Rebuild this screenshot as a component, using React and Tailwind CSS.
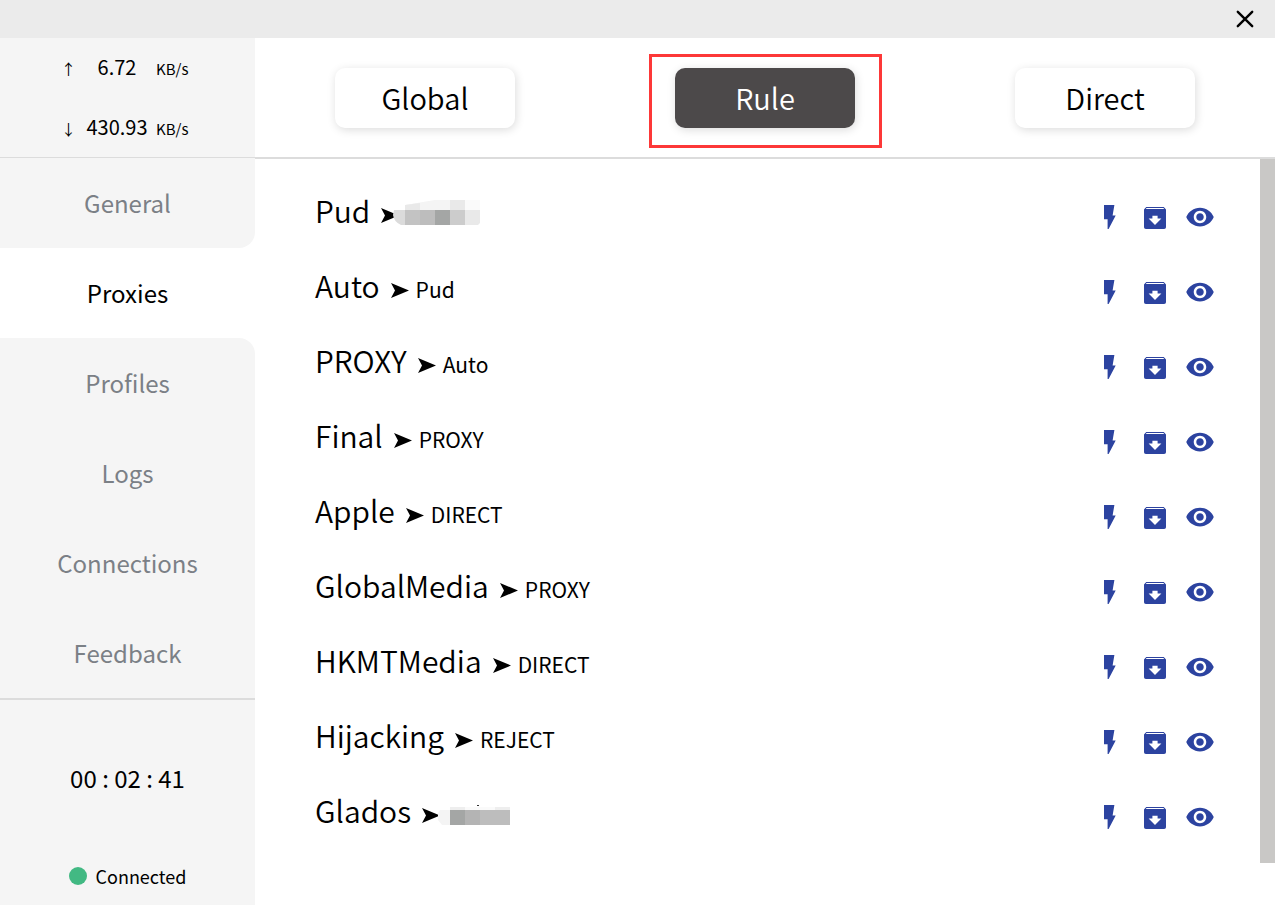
const nav = ["General", "Proxies", "Profiles", "Logs", "Connections", "Feedback"];
const modes = ["Global", "Rule", "Direct"];
const groups = [
  ["Pud", null],
  ["Auto", "Pud"],
  ["PROXY", "Auto"],
  ["Final", "PROXY"],
  ["Apple", "DIRECT"],
  ["GlobalMedia", "PROXY"],
  ["HKMTMedia", "DIRECT"],
  ["Hijacking", "REJECT"],
  ["Glados", null],
];

function Speed({ arrow, value }) {
  return (
    <div className="flex h-[60px] items-baseline pl-[61px] leading-[58px]">
      <span className="w-[17px] text-[15px]">{arrow}</span>
      <span className="w-[78px] text-center text-[20px]">{value}</span>
      <span className="text-[15px]">KB/s</span>
    </div>
  );
}

function Arrow() {
  return (
    <svg viewBox="0 0 18 15" className="mt-[7px] ml-[11px] h-[15px] w-[18px] shrink-0" aria-hidden="true">
      <path d="M0 0 18 7.5 0 15 4 7.5Z" />
    </svg>
  );
}

function FlashIcon() {
  return (
    <svg viewBox="0 0 30 30" className="h-[30px] w-[30px]" fill="currentColor" aria-hidden="true">
      <path d="M9 3H19.4L17.6 13.5H20.7L13.6 27H12.6V17.3H9Z" />
    </svg>
  );
}

function ArchiveIcon() {
  return (
    <svg viewBox="0 0 30 30" className="h-[30px] w-[30px]" fill="currentColor" fillRule="evenodd" aria-hidden="true">
      <path d="M6.2 5H23.8L26 7.4V25.2Q26 27 24.1 27H5.9Q4 27 4 25.2V7.4ZM6.6 6 5.8 7.1H24.2L23.4 6ZM12.4 13.7V16.4H8.6L15 23 21.4 16.4H17.6V13.7Z" />
    </svg>
  );
}

function EyeIcon() {
  return (
    <svg viewBox="0 0 24 24" className="h-[30px] w-[30px]" fill="currentColor" aria-hidden="true">
      <path d="M12 4.5C7 4.5 2.73 7.61 1 12c1.73 4.39 6 7.5 11 7.5s9.27-3.11 11-7.5c-1.73-4.39-6-7.5-11-7.5zM12 17c-2.76 0-5-2.24-5-5s2.24-5 5-5 5 2.24 5 5-2.24 5-5 5zm0-8c-1.66 0-3 1.34-3 3s1.34 3 3 3 3-1.34 3-3-1.34-3-3-3z" />
    </svg>
  );
}

function MaskPud() {
  return (
    <svg viewBox="0 0 87 25" className="-ml-[6px] mt-[2px] h-[25px] w-[87px]" aria-hidden="true">
      <path fill="#f4f4f4" d="M12 5 42 0H87V10H12Z" />
      <path fill="#e9e9e9" d="M12 5 27 3V10H12Z" />
      <path fill="#e9e9e9" d="M57 0H72V10H57Z" />
      <path fill="#fafafa" d="M72 0H87V10H72Z" />
      <path fill="#dbdbdb" d="M1 10H12V25H8Q1 22 0 15Z" />
      <path fill="#c3c3c3" d="M12 10H27V25H12Z" />
      <path fill="#bdbdbd" d="M27 10H42V25H27Z" />
      <path fill="#a4a6a5" d="M42 10H57V25H42Z" />
      <path fill="#cccccc" d="M57 10H72V25H57Z" />
      <path fill="#e9e9e9" d="M72 10H87V23L85 25H72Z" />
    </svg>
  );
}

function MaskGlados() {
  return (
    <svg viewBox="0 0 72 20" className="-ml-[2px] mt-[6px] h-[20px] w-[72px]" aria-hidden="true">
      <path fill="#f4f4f4" d="M2 5H12V20H4L0 15V8Z" />
      <path fill="#eeeeee" d="M12 2H27V5H12ZM57 2H72V5H57Z" />
      <path fill="#fafafa" d="M27 2H57V5H27Z" />
      <path fill="#a4a6a5" d="M12 5H27V20H12Z" />
      <path fill="#b4b4b4" d="M27 5H42V20H27Z" />
      <path fill="#bdbdbd" d="M42 5H72V20H42Z" />
      <path fill="#333333" d="M39 0H41V1H39Z" />
    </svg>
  );
}

export default function App() {
  return (
    <div className="flex min-h-screen flex-col bg-white font-['Noto_Sans_CJK_SC',sans-serif] text-black">
      <header className="flex h-[38px] items-center justify-end bg-[#ebebeb] pr-5">
        <button type="button" aria-label="Close">
          <svg viewBox="0 0 20 20" className="h-5 w-5" fill="none" stroke="#000" strokeWidth="2.4" strokeLinecap="round">
            <path d="M2.8 2.8 17.2 17.2M17.2 2.8 2.8 17.2" />
          </svg>
        </button>
      </header>

      <div className="flex flex-1">
        <aside className="flex w-[255px] shrink-0 flex-col bg-[#f5f5f5]">
          <div className="h-[120px] border-b border-[#dcdcdc]">
            <Speed arrow="↑" value="6.72" />
            <Speed arrow="↓" value="430.93" />
          </div>
          <nav className="flex flex-col bg-white">
            {nav.map((item) => (
              <a
                key={item}
                href="#"
                aria-current={item === "Proxies" ? "page" : undefined}
                className={
                  "flex h-[90px] items-center justify-center text-[24px] " +
                  (item === "Proxies" ? "bg-white text-black" : "bg-[#f5f5f5] text-[#7b8086]") +
                  (item === "General" ? " rounded-br-2xl" : "") +
                  (item === "Profiles" ? " rounded-tr-2xl" : "")
                }
              >
                {item}
              </a>
            ))}
          </nav>
          <div className="flex flex-1 flex-col items-center border-t-2 border-[#dcdcdc] pt-[58px]">
            <time className="text-[24px] leading-[40px]">00 : 02 : 41</time>
            <div className="mt-[62px] flex items-center gap-[9px] text-[18px] leading-[32px]">
              <span className="h-[18px] w-[18px] rounded-full bg-[#42b983]" />
              Connected
            </div>
          </div>
        </aside>

        <main className="flex min-w-0 flex-1 flex-col">
          <div className="flex h-[121px] items-center justify-around border-b-2 border-[#dcdcdc]">
            {modes.map((mode) => (
              <div key={mode} className="relative">
                <button
                  type="button"
                  aria-pressed={mode === "Rule"}
                  className={
                    "flex h-[60px] w-[180px] items-center justify-center rounded-[10px] text-[29px] font-[350] shadow-[1px_2px_10px_rgba(0,0,0,0.14)] " +
                    (mode === "Rule" ? "bg-[#4c494a] text-white" : "bg-white text-black")
                  }
                >
                  {mode}
                </button>
                {mode === "Rule" && (
                  <span className="pointer-events-none absolute -top-[14px] -right-[27px] -bottom-[20px] -left-[26px] border-[3px] border-[#fd3838]" />
                )}
              </div>
            ))}
          </div>

          <div className="flex flex-1">
            <ul className="min-w-0 flex-1 pt-[15px] pr-[45px] pl-[60px]">
              {groups.map(([name, target]) => (
                <li key={name} className="flex h-[75px] items-center">
                  <span className="pb-[3px] text-[30px] font-[350]">{name}</span>
                  <Arrow />
                  {target && <span className="mt-[6px] ml-[7px] text-[21px]">{target}</span>}
                  {name === "Pud" && <MaskPud />}
                  {name === "Glados" && <MaskGlados />}
                  <div className="mt-[11px] ml-auto flex gap-[15px] text-[#2c43a0]">
                    <button type="button" aria-label={"Test " + name}><FlashIcon /></button>
                    <button type="button" aria-label={"Collapse " + name}><ArchiveIcon /></button>
                    <button type="button" aria-label={"Show " + name}><EyeIcon /></button>
                  </div>
                </li>
              ))}
            </ul>
            <div className="flex w-[15px] flex-col pb-[42px]">
              <div className="flex-1 bg-[#c9c8c6]" />
            </div>
          </div>
        </main>
      </div>
    </div>
  );
}
